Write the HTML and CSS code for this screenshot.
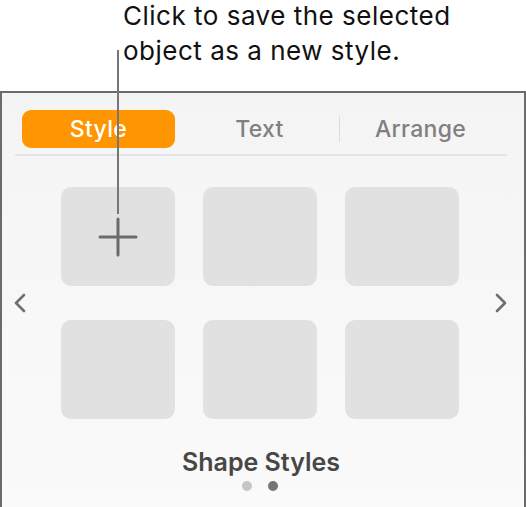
FILE: index.html
```html
<!DOCTYPE html>
<html lang="en">
<head>
  <meta charset="UTF-8">
  <meta name="viewport" content="width=device-width, initial-scale=1.0">
  <title>Shape Styles</title>
  <link rel="stylesheet" href="styles.css">
</head>
<body>
  <div class="page">
    <p class="callout">Click to save the selected<br>object as a new style.</p>
    <div class="leader"></div>

    <div class="panel">
      <div class="tabs">
        <a class="tab active">Style</a>
        <a class="tab">Text</a>
        <span class="tab-sep"></span>
        <a class="tab">Arrange</a>
      </div>
      <div class="tab-rule"></div>

      <div class="carousel">
        <svg class="chevron" width="14" height="20" viewBox="0 0 14 20">
          <path d="M11 2 L3 10 L11 18" fill="none" stroke="#6f6f6f" stroke-width="2.6" stroke-linecap="round" stroke-linejoin="round"/>
        </svg>
        <div class="style-grid">
          <div class="style-tile add">
            <svg width="40" height="40" viewBox="0 0 40 40">
              <path d="M20 2 V38 M2 20 H38" stroke="#6b6b6b" stroke-width="3" stroke-linecap="round"/>
            </svg>
          </div>
          <div class="style-tile"></div>
          <div class="style-tile"></div>
          <div class="style-tile"></div>
          <div class="style-tile"></div>
          <div class="style-tile"></div>
        </div>
        <svg class="chevron" width="14" height="20" viewBox="0 0 14 20">
          <path d="M3 2 L11 10 L3 18" fill="none" stroke="#6f6f6f" stroke-width="2.6" stroke-linecap="round" stroke-linejoin="round"/>
        </svg>
      </div>

      <h3 class="section-title">Shape Styles</h3>
      <div class="dots">
        <span class="dot"></span>
        <span class="dot current"></span>
      </div>
    </div>
  </div>
</body>
</html>
```

FILE: styles.css
```css
* {
  margin: 0;
  padding: 0;
  box-sizing: border-box;
  font-family: Inter, "Noto Sans", sans-serif;
}

body {
  background-color: white;
  width: 526px;
  height: 507px;
  overflow: hidden;
}

.page {
  position: relative;
  height: 507px;
  display: flex;
  flex-direction: column;
}

/* Callout text above the panel */
.callout {
  margin-top: -2px;
  padding-left: 123px;
  height: 93px;
  font-size: 26px;
  line-height: 35px;
  letter-spacing: 0.5px;
  color: #111;
}

.leader {
  position: absolute;
  left: 117px;
  top: 50px;
  width: 2px;
  height: 164px;
  background-color: #767676;
  z-index: 2;
}

/* Inspector panel */
.panel {
  flex: 1;
  border: 2px solid #6b6b6b;
  border-bottom: none;
  background: linear-gradient(180deg, #f4f4f4 0%, #f8f8f8 60%, #fafafa 100%);
  padding-top: 17px;
}

.tabs {
  display: flex;
  align-items: center;
  padding-left: 20px;
  gap: 8px;
  height: 38px;
}

.tab {
  width: 153px;
  height: 38px;
  line-height: 38px;
  text-align: center;
  font-size: 23px;
  font-weight: 500;
  letter-spacing: 0.3px;
  color: #808080;
  border-radius: 9px;
}

.tab.active {
  background-color: #ff9500;
  color: white;
}

.tab-sep {
  width: 1px;
  height: 26px;
  background-color: #dcdcdc;
  margin: 0 -4px 0 -5px;
}

.tab-rule {
  margin: 6px 17px 0 13px;
  height: 2px;
  background-color: #e3e3e3;
}

.carousel {
  display: flex;
  align-items: center;
  margin-top: 31px;
  padding-left: 11px;
}

.chevron {
  flex-shrink: 0;
}

.style-grid {
  display: grid;
  grid-template-columns: repeat(3, 114px);
  grid-auto-rows: 99px;
  column-gap: 28px;
  row-gap: 34px;
  margin: 0 35px 0 34px;
}

.style-tile {
  background-color: #e1e1e1;
  border-radius: 10px;
  display: flex;
  align-items: center;
  justify-content: center;
}

.section-title {
  margin-top: 28px;
  text-align: center;
  font-size: 25px;
  line-height: 30px;
  font-weight: 600;
  color: #474747;
  padding-right: 4px;
}

.dots {
  display: flex;
  justify-content: center;
  gap: 16px;
  margin-top: 4px;
  padding-right: 6px;
}

.dot {
  width: 10px;
  height: 10px;
  border-radius: 50%;
  background-color: #c6c6c6;
}

.dot.current {
  background-color: #757575;
}
```
